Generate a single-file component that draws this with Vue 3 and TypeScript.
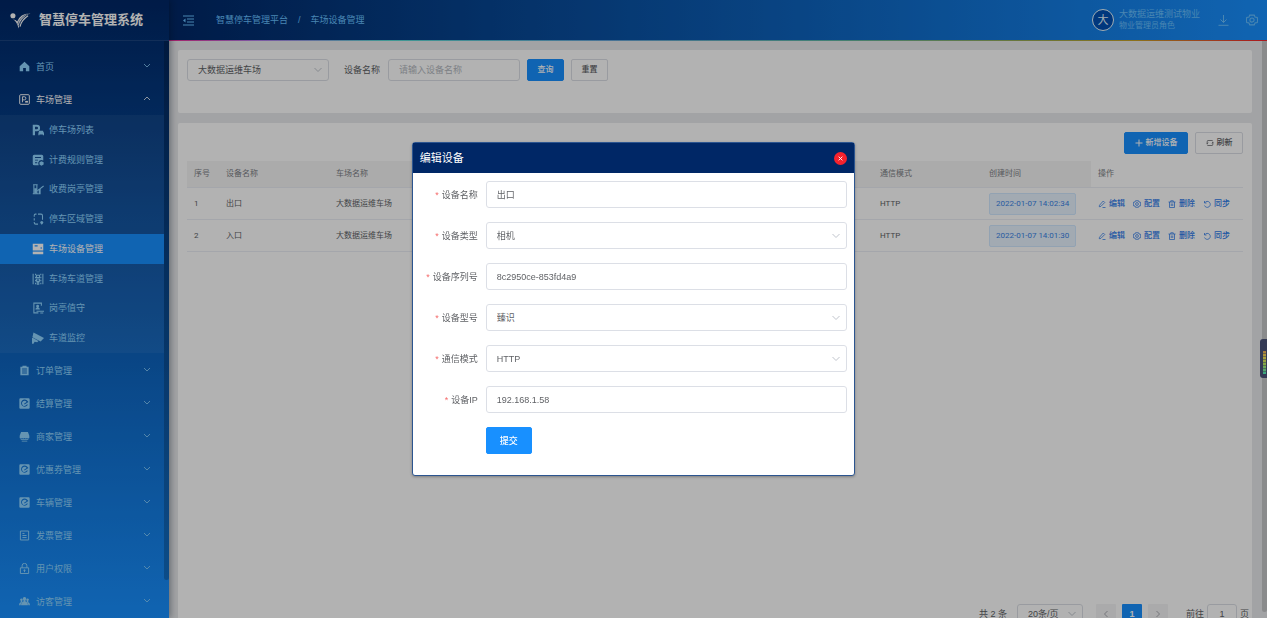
<script setup lang="ts">
import { ref } from 'vue'

interface Shape {
  d: string
  line?: boolean
}

interface MenuItem {
  label: string
  icon: string
}

const icons: Record<string, Shape[]> = {
  home: [{ d: 'M8 1 1 7.500V15h5v-5h4v5h5V7.500z' }],
  parking: [
    { d: 'M2.500 1h11q1.500 0 1.500 1.500v11q0 1.500-1.500 1.500h-11Q1 15 1 13.500v-11Q1 1 2.500 1z', line: true },
    { d: 'M5 12V4h3q2 0 2 2.200T8 8.500H5', line: true },
    { d: 'M9 10h4v2.500H9z' }
  ],
  lot: [
    { d: 'M1 1h5.500a4 4 0 0 1 0 8.500H4V15H1zM4 3.500V7h2.300a1.700 1.700 0 0 0 0-3.500z' },
    { d: 'M9.500 9h5l1.500 3v3h-1.500v-1H10v1H8.500v-3z' }
  ],
  rule: [
    { d: 'M3 1h10q2 0 2 2v5.500q-5-1.500-6.500 2.500-.5 2 .5 4H3q-2 0-2-2V3q0-2 2-2zM4 4v1.300h8V4zM4 7.500v1.300h4V7.500zM4 11v1.300h3V11z' },
    { d: 'M12.500 9.500 15.500 11v3l-3 1.500-2.500-1.500v-3z' }
  ],
  booth: [
    { d: 'M2.500 14V2.500M6.500 14V2.500M1.500 2.300h6M1 14.300h8', line: true },
    { d: 'M3 7h3.500v7H3zM9 8h2.500v7H9z' },
    { d: 'M7 10.500 15.500 4', line: true }
  ],
  area: [
    { d: 'M6 1.500H4.500Q3 1.500 3 3v2M3 7v3M3 12v1q0 1.800 2 1.800h3M8 1.500h4Q14 1.500 14 3.500V9', line: true },
    { d: 'M13 10.500a2 2 0 0 1 2 2q0 1-2 3-2-2-2-3a2 2 0 0 1 2-2z' }
  ],
  device: [
    { d: 'M1 1h14v9H1zM3.500 3v1.500h4V3zM11.500 5.500v2H13v-2z' },
    { d: 'M1 11.500h14V15H1z' }
  ],
  lane: [
    { d: 'M1.500 1v14M14.500 1v14', line: true },
    { d: 'M4 1h1.500v2H4zM4 5h1.500v2H4zM4 9h1.500v2H4zM4 13h1.500v2H4zM11 1h1.500v2H11zM11 5h1.500v2H11zM11 9h1.500v2H11zM11 13h1.500v2H11z' },
    { d: 'M6 3h4v3H6zM6 8h4v3H6zM7 12h2v3H7z', line: true }
  ],
  duty: [
    { d: 'M12.500 5V1.500h-10v13h6', line: true },
    { d: 'M7.500 3.500a2 2 0 0 1 1 3.700q2 .7 2 2.800h-6q0-2.100 2-2.800a2 2 0 0 1 1-3.700z' },
    { d: 'M6 12.300h10M11 14.700h4', line: true }
  ],
  camera: [
    { d: 'M2 .5 16 8l-4.500 4.500L.5 7z' },
    { d: 'M0 8h1.500l7 4-1.500 1.500-3.500-.5L2 15.500H0z' }
  ],
  order: [{ d: 'M5 1h6v1.500h3V15H2V2.500h3zM4.500 5v1.400h7V5zM4.500 8v1.400h7V8zM4.500 11v1.400h7V11z' }],
  settle: [
    { d: 'M2 .5h12q1.500 0 1.500 1.500v12q0 1.500-1.500 1.500H2Q.5 15.500.5 14V2Q.5.5 2 .5zM12.500 4.500A5.200 5.200 0 1 0 13 9.500h-1.700a3.700 3.700 0 1 1-.2-3.700L7.300 8.200l.8 1.200 5.600-3.500z' }
  ],
  merchant: [
    { d: 'M3 1.500h10L15 7v3q-2 1.500-3.500 0-1.500 1.500-3.500 0-2 1.500-3.500 0-1.500 1.500-3.500 0V7z' },
    { d: 'M2.500 12h11v1h-11zM4 14h8v1.200H4z' }
  ],
  invoice: [
    { d: 'M2 1.500h12v13H2z', line: true },
    { d: 'M5 5h3M5 8h6M5 11h6', line: true }
  ],
  lock: [
    { d: 'M2 7h12v8.300H2zM4.500 7V4a3.500 3.500 0 0 1 7 0v3', line: true },
    { d: 'M8 9.300v4M6.500 10.700h3', line: true }
  ],
  visitor: [
    { d: 'M8 1.500a2.500 2.500 0 0 1 1.500 4.500v2q3.500.7 3.500 5.500H3q0-4.800 3.500-5.500V6A2.500 2.500 0 0 1 8 1.500z' },
    { d: 'M3.500 3.500a1.900 1.900 0 0 1 1.200 3.400v2Q2.500 10 2.300 13.500H0q0-3.500 2.500-4.500V7a1.900 1.900 0 0 1 1-3.500zM12.500 3.500a1.900 1.900 0 0 0-1.200 3.400v2q2.200 1.100 2.400 4.600H16q0-3.500-2.500-4.500V7a1.900 1.900 0 0 0-1-3.500z' }
  ],
  edit: [{ d: 'M3 10.500 10.500 2 13.500 5 6 12.500 2.500 13.500zM9 15h6', line: true }],
  gear: [
    { d: 'M5 1.500h6l1 2.500 3 .5L15.500 8 15 11.500l-3 .5-1 2.500H5L4 12l-3-.5L.5 8 1 4.500 4 4z', line: true },
    { d: 'M8 5.200a2.800 2.800 0 1 1 0 5.600 2.800 2.800 0 0 1 0-5.600z', line: true }
  ],
  trash: [{ d: 'M1 4h14M3 4v11h10V4M5.500 4V1.500h5V4M6.500 7v5M9.500 7v5', line: true }],
  sync: [{ d: 'M3 2v4h4M3.500 5.500A6 6 0 1 1 3 11', line: true }],
  refresh: [{ d: 'M2.500 9.500V4.500Q2.500 3 4 3h8q1.500 0 1.500 1.500M.5 7.500l2 2 2-2M13.500 6.500v5q0 1.500-1.500 1.500H4q-1.500 0-1.500-1.500M11.500 8.500l2-2 2 2', line: true }]
}

const home: MenuItem = { label: '首页', icon: 'home' }
const parking: MenuItem = { label: '车场管理', icon: 'parking' }

const subMenu: MenuItem[] = [
  { label: '停车场列表', icon: 'lot' },
  { label: '计费规则管理', icon: 'rule' },
  { label: '收费岗亭管理', icon: 'booth' },
  { label: '停车区域管理', icon: 'area' },
  { label: '车场设备管理', icon: 'device' },
  { label: '车场车道管理', icon: 'lane' },
  { label: '岗亭值守', icon: 'duty' },
  { label: '车道监控', icon: 'camera' }
]

const lowerMenu: MenuItem[] = [
  { label: '订单管理', icon: 'order' },
  { label: '结算管理', icon: 'settle' },
  { label: '商家管理', icon: 'merchant' },
  { label: '优惠券管理', icon: 'settle' },
  { label: '车辆管理', icon: 'settle' },
  { label: '发票管理', icon: 'invoice' },
  { label: '用户权限', icon: 'lock' },
  { label: '访客管理', icon: 'visitor' }
]

const rows = [
  { id: 1, name: '出口', lot: '大数据运维车场', mode: 'HTTP', created: '2022-01-07 14:02:34' },
  { id: 2, name: '入口', lot: '大数据运维车场', mode: 'HTTP', created: '2022-01-07 14:01:30' }
]

const actions: MenuItem[] = [
  { label: '编辑', icon: 'edit' },
  { label: '配置', icon: 'gear' },
  { label: '删除', icon: 'trash' },
  { label: '同步', icon: 'sync' }
]

const fields = ref([
  { id: 'name', label: '设备名称', value: '出口', select: false },
  { id: 'type', label: '设备类型', value: '相机', select: true },
  { id: 'serial', label: '设备序列号', value: '8c2950ce-853fd4a9', select: false },
  { id: 'model', label: '设备型号', value: '臻识', select: true },
  { id: 'mode', label: '通信模式', value: 'HTTP', select: true },
  { id: 'ip', label: '设备IP', value: '192.168.1.58', select: false }
])

const activeItem = ref('车场设备管理')
const keyword = ref('')
const jumpTo = ref('1')
const dialogOpen = ref(true)
</script>

<template>
  <div class="layout">
    <aside class="sidebar">
      <div class="brand">
        <svg class="brand-logo" viewBox="0 0 22 18" aria-hidden="true">
          <circle cx="3" cy="4" r="2.700" fill="#fff" />
          <path d="M3 8Q7 9.500 9 17.500 10 6 21.500 1.500 11 1 7.500 10 6 8 3 8z" fill="#fff" />
          <path d="M8 13Q10.500 4.500 20 1.500M9 15Q11.500 6 21 1.800" fill="none" stroke="#002766" stroke-width="0.600" />
          <path d="M10.500 15.500Q12 8.500 19 4" fill="none" stroke="#fff" stroke-width="1.200" />
        </svg>
        <h1>智慧停车管理系统</h1>
      </div>
      <nav class="menu">
        <button class="menu-item" type="button">
          <svg class="icon" viewBox="0 0 16 16" aria-hidden="true">
            <path v-for="s in icons[home.icon]" :key="s.d" :d="s.d" :class="s.line ? 'line' : 'solid'" />
          </svg>
          <span>{{ home.label }}</span>
          <svg class="arrow" viewBox="0 0 8 8" aria-hidden="true"><path d="M1 2 4 5 7 2" class="line" /></svg>
        </button>
        <button class="menu-item open" type="button" aria-expanded="true">
          <svg class="icon" viewBox="0 0 16 16" aria-hidden="true">
            <path v-for="s in icons[parking.icon]" :key="s.d" :d="s.d" :class="s.line ? 'line' : 'solid'" />
          </svg>
          <span>{{ parking.label }}</span>
          <svg class="arrow" viewBox="0 0 8 8" aria-hidden="true"><path d="M1 5 4 2 7 5" class="line" /></svg>
        </button>
        <div class="submenu">
          <a
            v-for="item in subMenu"
            :key="item.label"
            href="#"
            class="sub-item"
            :class="{ active: item.label === activeItem }"
            @click.prevent="activeItem = item.label"
          >
            <svg class="icon" viewBox="0 0 16 16" aria-hidden="true">
              <path v-for="s in icons[item.icon]" :key="s.d" :d="s.d" :class="s.line ? 'line' : 'solid'" />
            </svg>
            <span>{{ item.label }}</span>
          </a>
        </div>
        <button v-for="item in lowerMenu" :key="item.label" class="menu-item" type="button">
          <svg class="icon" viewBox="0 0 16 16" aria-hidden="true">
            <path v-for="s in icons[item.icon]" :key="s.d" :d="s.d" :class="s.line ? 'line' : 'solid'" />
          </svg>
          <span>{{ item.label }}</span>
          <svg class="arrow" viewBox="0 0 8 8" aria-hidden="true"><path d="M1 2 4 5 7 2" class="line" /></svg>
        </button>
      </nav>
      <div class="side-scroll"></div>
    </aside>

    <div class="content">
      <header class="topbar">
        <button class="icon-btn" type="button" aria-label="收起菜单">
          <svg class="fold" viewBox="0 0 11 11" aria-hidden="true">
            <path d="M0 1h11M4 4h7M4 7h7M0 10h11" class="line" />
            <path d="M0 5.500 2.500 3.500v4z" class="solid" />
          </svg>
        </button>
        <nav class="crumbs">
          <a href="#">智慧停车管理平台</a>
          <span>/</span>
          <a href="#">车场设备管理</a>
        </nav>
        <div class="user">
          <span class="avatar">大</span>
          <div class="user-text">
            <div class="user-name">大数据运维测试物业</div>
            <div class="user-role">物业管理员角色</div>
          </div>
        </div>
        <button class="icon-btn" type="button" aria-label="下载">
          <svg class="fold" viewBox="0 0 11 11" aria-hidden="true">
            <path d="M5.500 0v7.500M2.500 4.500l3 3 3-3M.5 10.300h10" class="line" />
          </svg>
        </button>
        <button class="icon-btn gear-btn" type="button" aria-label="设置">
          <svg class="gear" viewBox="0 0 16 16" aria-hidden="true">
            <path v-for="s in icons.gear" :key="s.d" :d="s.d" class="line" />
          </svg>
        </button>
      </header>
      <div class="rainbow"></div>

      <main class="main">
        <div class="panels">
          <section class="card filter">
            <div class="select lot-select">
              <select aria-label="车场">
                <option>大数据运维车场</option>
              </select>
              <svg class="caret" viewBox="0 0 8 8" aria-hidden="true"><path d="M.5 2 4 5.500 7.500 2" class="line" /></svg>
            </div>
            <label class="filter-label" for="keyword">设备名称</label>
            <input id="keyword" v-model="keyword" class="text-input keyword" type="text" placeholder="请输入设备名称" />
            <button class="btn primary" type="button">查询</button>
            <button class="btn" type="button">重置</button>
          </section>

          <section class="card list">
            <div class="toolbar">
              <button class="btn primary add" type="button">
                <svg class="mini" viewBox="0 0 8 8" aria-hidden="true"><path d="M4 .5v7M.5 4h7" class="line" /></svg>
                <span>新增设备</span>
              </button>
              <button class="btn reload" type="button">
                <svg class="mini" viewBox="0 0 16 16" aria-hidden="true">
                  <path v-for="s in icons.refresh" :key="s.d" :d="s.d" class="line" />
                </svg>
                <span>刷新</span>
              </button>
            </div>

            <div class="table-area">
              <table>
                <colgroup>
                  <col class="c-index" />
                  <col class="c-name" />
                  <col class="c-name" />
                  <col />
                  <col class="c-std" />
                  <col class="c-std" />
                  <col class="c-ops" />
                </colgroup>
                <thead>
                  <tr>
                    <th>序号</th>
                    <th>设备名称</th>
                    <th>车场名称</th>
                    <th></th>
                    <th>通信模式</th>
                    <th>创建时间</th>
                    <th class="ops-head">操作</th>
                  </tr>
                </thead>
                <tbody>
                  <tr v-for="row in rows" :key="row.id">
                    <td>{{ row.id }}</td>
                    <td>{{ row.name }}</td>
                    <td>{{ row.lot }}</td>
                    <td></td>
                    <td>{{ row.mode }}</td>
                    <td><span class="tag">{{ row.created }}</span></td>
                    <td>
                      <div class="ops">
                        <a v-for="a in actions" :key="a.label" href="#" @click.prevent>
                          <svg class="mini" viewBox="0 0 16 16" aria-hidden="true">
                            <path v-for="s in icons[a.icon]" :key="s.d" :d="s.d" class="line" />
                          </svg>
                          <span>{{ a.label }}</span>
                        </a>
                      </div>
                    </td>
                  </tr>
                </tbody>
              </table>
            </div>

            <div class="pager">
              <span class="total">共 2 条</span>
              <div class="select size-select">
                <select aria-label="每页条数">
                  <option>20条/页</option>
                </select>
                <svg class="caret" viewBox="0 0 8 8" aria-hidden="true"><path d="M.5 2 4 5.500 7.500 2" class="line" /></svg>
              </div>
              <div class="pages">
                <button type="button" class="page" disabled aria-label="上一页">
                  <svg class="mini" viewBox="0 0 8 8" aria-hidden="true"><path d="M5.500 1 2.500 4l3 3" class="line" /></svg>
                </button>
                <button type="button" class="page current">1</button>
                <button type="button" class="page" disabled aria-label="下一页">
                  <svg class="mini" viewBox="0 0 8 8" aria-hidden="true"><path d="M2.500 1 5.500 4l-3 3" class="line" /></svg>
                </button>
              </div>
              <label class="jump">
                <span>前往</span>
                <input v-model="jumpTo" class="text-input" type="text" />
                <span>页</span>
              </label>
            </div>
          </section>
        </div>
        <div class="page-scroll"><div class="page-thumb"></div></div>
      </main>
    </div>

    <div v-if="dialogOpen" class="mask">
      <div class="dialog" role="dialog" aria-labelledby="dialog-title">
        <div class="dialog-head">
          <h2 id="dialog-title">编辑设备</h2>
          <button class="close" type="button" aria-label="关闭" @click="dialogOpen = false">
            <svg viewBox="0 0 8 8" aria-hidden="true"><path d="M1 1 7 7M7 1 1 7" class="line" /></svg>
          </button>
        </div>
        <form class="form" @submit.prevent>
          <div v-for="f in fields" :key="f.id" class="form-row">
            <label :for="f.id"><i>*</i>{{ f.label }}</label>
            <div v-if="f.select" class="select">
              <select :id="f.id" v-model="f.value">
                <option>{{ f.value }}</option>
              </select>
              <svg class="caret" viewBox="0 0 8 8" aria-hidden="true"><path d="M.5 2 4 5.500 7.500 2" class="line" /></svg>
            </div>
            <input v-else :id="f.id" v-model="f.value" class="text-input" type="text" />
          </div>
          <button class="btn primary submit" type="submit">提交</button>
        </form>
      </div>
    </div>

    <div class="gauge"><div class="gauge-bar"></div></div>
  </div>
</template>

<style>
html,
body {
  height: 100%;
  margin: 0;
  overflow: hidden;
}
</style>

<style scoped>
.layout,
.layout * {
  box-sizing: border-box;
}

.layout {
  display: flex;
  height: 100vh;
  overflow: hidden;
  color: #606266;
  font-family: "Liberation Sans", "Noto Sans CJK SC", sans-serif;
  font-size: 9px;
  line-height: 14px;
}

button,
input,
select {
  font: inherit;
  color: inherit;
}

button {
  cursor: pointer;
}

a {
  color: inherit;
  text-decoration: none;
}

.line {
  fill: none;
  stroke: currentColor;
  stroke-width: 1;
}

.solid {
  fill: currentColor;
  fill-rule: evenodd;
}

.sidebar {
  position: relative;
  z-index: 1;
  flex: none;
  width: 169px;
  background: linear-gradient(180deg, #002766, #1890ff);
  box-shadow: 2px 0 6px rgba(0, 21, 41, 0.35);
  color: #91d5ff;
}

.brand {
  display: flex;
  align-items: center;
  gap: 8px;
  height: 41px;
  padding-left: 10px;
  border-bottom: 1px solid rgba(255, 255, 255, 0.1);
}

.brand-logo {
  width: 21px;
  height: 17px;
}

.brand h1 {
  margin: 0;
  color: #fff;
  font-size: 13px;
  font-weight: 700;
  line-height: 20px;
  white-space: nowrap;
}

.menu {
  padding: 8px 5px 0 0;
}

.menu-item {
  display: flex;
  align-items: center;
  gap: 6px;
  width: 100%;
  height: 33px;
  padding: 2px 13px 0 19px;
  border: 0;
  background: none;
  text-align: left;
}

.menu-item.open {
  color: #fff;
}

.icon {
  flex: none;
  width: 11px;
  height: 11px;
}

.icon .line {
  stroke-width: 1.400;
}

.arrow {
  width: 8px;
  height: 8px;
  margin: 0 0 2px auto;
  opacity: 0.8;
}

.submenu {
  display: grid;
  grid-auto-rows: 1fr;
  height: 238px;
  background: rgba(255, 255, 255, 0.05);
}

.sub-item {
  display: flex;
  align-items: center;
  gap: 5px;
  padding-left: 32px;
}

.sub-item .icon {
  width: 12px;
  height: 12px;
}

.sub-item.active {
  background: #1890ff;
  color: #fff;
}

.side-scroll {
  position: absolute;
  top: 41px;
  right: 0;
  bottom: 38px;
  width: 5px;
  border-radius: 0 0 3px 3px;
  background: rgba(0, 0, 0, 0.2);
}

.content {
  display: flex;
  flex: 1;
  flex-direction: column;
  min-width: 0;
}

.topbar {
  display: flex;
  flex: none;
  align-items: center;
  height: 40px;
  padding: 0 9px 0 14px;
  background: linear-gradient(90deg, #002766, #1890ff);
  color: #69c0ff;
}

.rainbow {
  flex: none;
  height: 1px;
  background: linear-gradient(90deg, #eb2f96, #b37feb 8%, #5cdbd3 20%, #69a5d8 40%, #5fb8a8 60%, #a0a84a 80%, #c9a227 88%, #f5222d);
}

.icon-btn {
  display: flex;
  padding: 0;
  border: 0;
  background: none;
}

.fold {
  width: 11px;
  height: 11px;
}

.gear-btn {
  margin-left: 17px;
}

.gear {
  width: 12px;
  height: 12px;
}

.gear .line {
  stroke-width: 1.400;
}

.crumbs {
  display: flex;
  gap: 10px;
  margin: 0 auto 0 22px;
}

.user {
  display: flex;
  align-items: center;
  gap: 5px;
  margin-right: 18px;
}

.avatar {
  width: 22px;
  height: 22px;
  border: 1px solid #e6f7ff;
  border-radius: 50%;
  background: #0050b3;
  color: #e6f7ff;
  font-size: 11px;
  line-height: 20px;
  text-align: center;
}

.user-name {
  line-height: 11px;
}

.user-role {
  font-size: 8px;
  line-height: 11px;
}

.main {
  display: flex;
  flex: 1;
  min-height: 0;
  background: #e8eaec;
}

.panels {
  flex: 1;
  min-width: 0;
  padding: 9px 10px 0 9px;
}

.card {
  border-radius: 2px;
  background: #fff;
}

.filter {
  display: flex;
  align-items: flex-start;
  height: 63px;
  margin-bottom: 10px;
  padding: 9px;
}

.select {
  position: relative;
}

select,
.text-input {
  display: block;
  width: 100%;
  height: 22px;
  padding: 0 10px;
  border: 1px solid #dcdfe6;
  border-radius: 3px;
  outline: 0;
  background: #fff;
  appearance: none;
}

.caret {
  position: absolute;
  top: calc(50% - 4px);
  right: 7px;
  width: 8px;
  height: 8px;
  color: #c0c4cc;
  pointer-events: none;
}

.lot-select {
  width: 142px;
}

.filter-label {
  margin: 0 8px 0 15px;
  line-height: 22px;
}

.keyword {
  width: 132px;
}

.text-input::placeholder {
  color: #b4b8c0;
  opacity: 1;
}

.btn {
  display: flex;
  align-items: center;
  justify-content: center;
  gap: 3px;
  min-width: 37px;
  height: 22px;
  margin-left: 7px;
  padding: 0 9px;
  border: 1px solid #dcdfe6;
  border-radius: 2px;
  background: #fff;
  font-family: Roboto, "Noto Sans CJK SC", sans-serif;
  font-size: 8px;
  font-weight: 500;
}

.btn.primary {
  border-color: #1890ff;
  background: #1890ff;
  color: #fff;
}

.list {
  padding: 9px 9px 20px;
}

.toolbar {
  display: flex;
  justify-content: flex-end;
  margin-bottom: 7px;
}

.mini {
  flex: none;
  width: 8px;
  height: 8px;
}

.mini[viewBox="0 0 16 16"] .line {
  stroke-width: 1.500;
}

.btn.add {
  min-width: 64px;
}

.btn.reload {
  min-width: 48px;
}

.table-area {
  min-height: calc(100vh - 175px);
}

table {
  width: 100%;
  border-collapse: separate;
  border-spacing: 0;
  table-layout: fixed;
  font-family: Roboto, "Noto Sans CJK SC", sans-serif;
  font-size: 8px;
}

.c-index {
  width: 32px;
}

.c-name {
  width: 110px;
}

.c-std {
  width: 109px;
}

.c-ops {
  width: 152px;
}

th,
td {
  height: 32px;
  padding: 0 7px;
  border-bottom: 1px solid #ebeef5;
  font-weight: 400;
  text-align: left;
  white-space: nowrap;
}

th {
  height: 27px;
  background: #f5f5f5;
  color: #7c7f85;
}

th.ops-head {
  background: #fff;
}

.tag {
  display: inline-block;
  height: 22px;
  padding: 0 6px;
  border: 1px solid #d1e9ff;
  border-radius: 2px;
  background: #e8f4ff;
  color: #3a84e8;
  line-height: 20px;
  vertical-align: middle;
}

.ops {
  display: flex;
  gap: 8px;
  color: #2f7bea;
  font-weight: 500;
}

.ops a {
  display: flex;
  align-items: center;
  gap: 3px;
}

.pager {
  display: flex;
  align-items: center;
  justify-content: flex-end;
  margin-right: -6px;
}

.size-select {
  width: 66px;
  margin: 0 13px 0 10px;
}

.size-select select {
  height: 20px;
}

.pages {
  display: flex;
  gap: 6px;
}

.page {
  display: flex;
  align-items: center;
  justify-content: center;
  width: 20px;
  height: 20px;
  padding: 0;
  border: 0;
  border-radius: 1px;
  background: #f4f4f5;
}

.page:disabled {
  color: #a8abb2;
}

.page.current {
  background: #1890ff;
  color: #fff;
  font-weight: 700;
}

.jump {
  display: flex;
  align-items: center;
  gap: 3px;
  margin-left: 18px;
}

.jump .text-input {
  width: 30px;
  height: 20px;
  padding: 0;
  text-align: center;
}

.page-scroll {
  flex: none;
  width: 5px;
  padding-bottom: 6px;
}

.page-thumb {
  height: 100%;
  border-radius: 0 0 3px 3px;
  background: #c6c7c9;
}

.mask {
  position: fixed;
  inset: 0;
  z-index: 2;
  display: flex;
  align-items: center;
  justify-content: center;
  background: rgba(0, 0, 0, 0.3);
}

.dialog {
  width: 35%;
  min-width: 320px;
  border: 1px solid #2c5590;
  border-radius: 3px;
  background: #fff;
  box-shadow: 0 1px 3px rgba(0, 0, 0, 0.3);
}

.dialog-head {
  display: flex;
  align-items: center;
  justify-content: space-between;
  height: 30px;
  padding: 0 7px;
  background: #002766;
  color: #fff;
}

.dialog-head h2 {
  margin: 0;
  font-size: 11px;
  font-weight: 400;
}

.close {
  display: flex;
  align-items: center;
  justify-content: center;
  width: 13px;
  height: 13px;
  padding: 0;
  border: 0;
  border-radius: 50%;
  background: #f5222d;
  color: #fff;
}

.close svg {
  width: 5px;
  height: 5px;
}

.close .line {
  stroke-width: 1.400;
}

.form {
  padding: 8px 7px 21px;
}

.form-row {
  display: grid;
  grid-template-columns: 58px 1fr;
  column-gap: 8px;
  align-items: center;
  margin-bottom: 14px;
}

.form-row label {
  text-align: right;
  white-space: nowrap;
}

.form-row i {
  margin-right: 3px;
  color: #f56c6c;
  font-style: normal;
}

.form-row select,
.form-row .text-input {
  height: 27px;
}

.submit {
  min-width: 46px;
  height: 27px;
  margin-left: 66px;
  font-size: 9px;
}

.gauge {
  position: fixed;
  top: 339px;
  right: 0;
  z-index: 3;
  width: 7px;
  height: 39px;
  padding: 12px 1px 4px 3px;
  border-radius: 3px 0 0 3px;
  background: #343a55;
}

.gauge-bar {
  height: 100%;
  background:
    repeating-linear-gradient(180deg, transparent 0 2px, rgba(52, 58, 85, 0.5) 2px 3px),
    linear-gradient(180deg, #a8783c, #b0a03a 25%, #7fa848 60%, #35a886);
}
</style>
